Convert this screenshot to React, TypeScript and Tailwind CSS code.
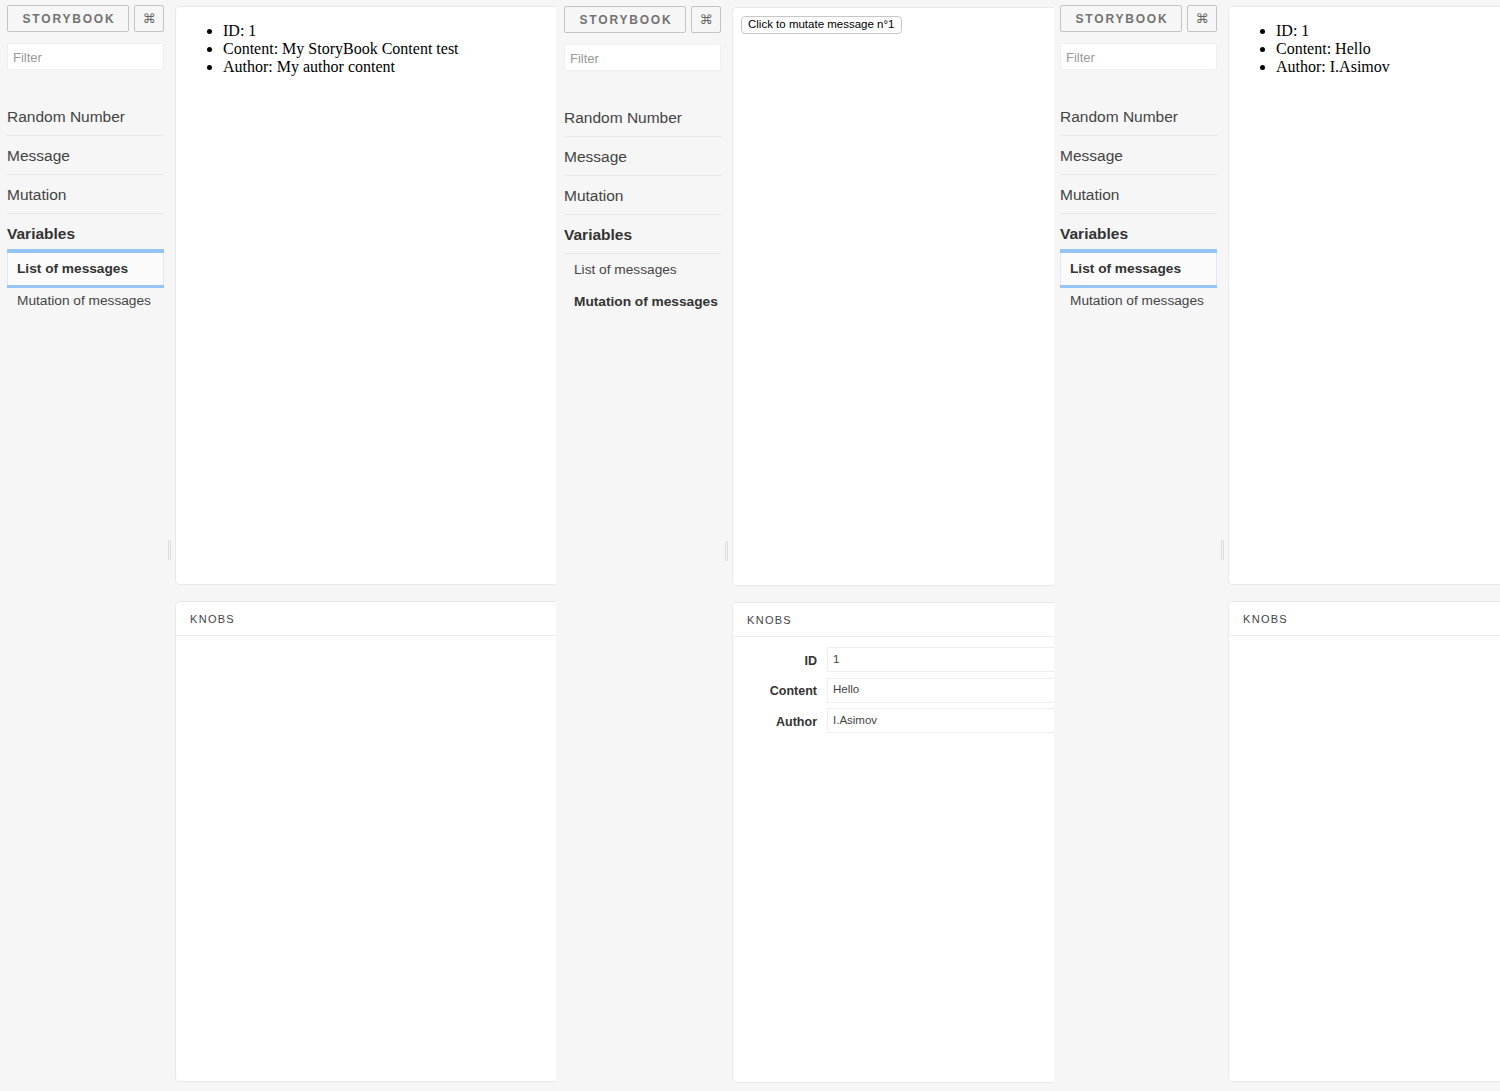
import type { ReactNode } from "react"

const sans = "font-['Liberation_Sans','Helvetica_Neue',Arial,sans-serif]"

function Sidebar({ selected }: { selected: "list" | "mutation" }) {
  const sections = ["Random Number", "Message", "Mutation"]

  return (
    <div className={`w-[157px] flex-none ${sans}`}>
      <div className="flex h-[27px] gap-[5px]">
        <div className="flex flex-1 items-center justify-center rounded-[2px] border border-[#c4c4c4] pl-[2px] text-[12px] font-bold tracking-[1.8px] text-[#737373]">
          STORYBOOK
        </div>
        <div className="flex w-[30px] items-center justify-center rounded-[2px] border border-[#c4c4c4] font-['DejaVu_Sans',sans-serif] text-[13px] text-[#666]">
          ⌘
        </div>
      </div>

      <div className="mt-[11px] flex h-[27px] items-center rounded-[2px] border border-[#f0f0f0] bg-white pl-[5px] pt-[2px] text-[13px] text-[#999]">
        Filter
      </div>

      <div className="mt-[27px]">
        {sections.map((name) => (
          <div key={name} className="flex h-[39px] items-center border-b border-[#e9e9e9] pt-px text-[15.5px] text-[#444]">
            {name}
          </div>
        ))}
        <div className="flex h-[39px] items-center border-b border-[#e9e9e9] pt-px text-[15.5px] font-bold text-[#333]">
          Variables
        </div>

        {selected === "list" ? (
          <div className="flex h-[32px] items-center border-x border-[#d9e8fb] bg-[#fbfbfb] pl-[9px] pt-px text-[13.7px] font-bold text-[#333] shadow-[0_-4px_0_#96c4f7,0_3px_0_#96c4f7]">
            List of messages
          </div>
        ) : (
          <div className="flex h-[32px] items-center pl-[10px] pt-px text-[13.7px] text-[#444]">List of messages</div>
        )}
        <div
          className={`flex h-[32px] items-center pl-[10px] pt-px text-[13.7px] ${
            selected === "mutation" ? "font-bold text-[#333]" : "text-[#444]"
          }`}
        >
          Mutation of messages
        </div>
      </div>
    </div>
  )
}

function MessageList({ content, author }: { content: string; author: string }) {
  return (
    <ul className="list-disc pl-[47px] pt-[15px] font-['Liberation_Serif','Times_New_Roman',serif] text-[16px] leading-[18px] text-black">
      <li>ID: 1</li>
      <li>Content: {content}</li>
      <li>Author: {author}</li>
    </ul>
  )
}

function KnobRow({ label, value }: { label: string; value: string }) {
  return (
    <div className="flex h-[25px] items-center">
      <div className="w-[84px] pt-[3px] text-right text-[12.5px] font-bold text-[#333]">{label}</div>
      <div className="ml-[10px] flex h-full flex-1 items-center border border-[#efefef] bg-white pl-[5px] text-[11.5px] text-[#444]">
        {value}
      </div>
    </div>
  )
}

function Panel({
  width,
  left,
  top,
  rightWidth,
  selected,
  preview,
  knobs,
}: {
  width: number
  left: string
  top: string
  rightWidth: string
  selected: "list" | "mutation"
  preview: ReactNode
  knobs?: ReactNode
}) {
  return (
    <div className={`flex h-full flex-none overflow-hidden ${left} ${top}`} style={{ width }}>
      <Sidebar selected={selected} />

      <div className="flex w-[11px] flex-none justify-center">
        <div className="mt-[535px] h-[20px] w-[3px] border-x border-[#dcdcdc]" />
      </div>

      <div className={`flex flex-none flex-col pt-px ${rightWidth}`}>
        <div className="h-[579px] rounded-[4px] border border-[#e9e9e9] bg-white">{preview}</div>
        <div className={`mt-[16px] h-[481px] rounded-[4px] border border-[#e9e9e9] bg-white ${sans}`}>
          <div className="flex h-[34px] items-center border-b border-[#ececec] pl-[14px] pt-px text-[11px] tracking-[1.3px] text-[#444]">
            KNOBS
          </div>
          {knobs}
        </div>
      </div>
    </div>
  )
}

export default function App() {
  return (
    <div className="flex h-[1091px] w-[1500px] overflow-hidden bg-[#f6f6f6]">
      <Panel
        width={556}
        left="pl-[7px]"
        top="pt-[5px]"
        rightWidth="w-[400px]"
        selected="list"
        preview={<MessageList content="My StoryBook Content test" author="My author content" />}
      />

      <Panel
        width={498}
        left="pl-[8px]"
        top="pt-[6px]"
        rightWidth="w-[340px]"
        selected="mutation"
        preview={
          <div className="pl-[8px] pt-[8px]">
            <button
              className={`flex h-[18px] items-center rounded-[4px] border border-[#c8c8c8] bg-white px-[6px] text-[11.5px] text-black ${sans}`}
            >
              Click to mutate message n°1
            </button>
          </div>
        }
        knobs={
          <div className="flex flex-col gap-[5.5px] pt-[10px]">
            <KnobRow label="ID" value="1" />
            <KnobRow label="Content" value="Hello" />
            <KnobRow label="Author" value="I.Asimov" />
          </div>
        }
      />

      <Panel
        width={446}
        left="pl-[6px]"
        top="pt-[5px]"
        rightWidth="w-[300px]"
        selected="list"
        preview={<MessageList content="Hello" author="I.Asimov" />}
      />
    </div>
  )
}
